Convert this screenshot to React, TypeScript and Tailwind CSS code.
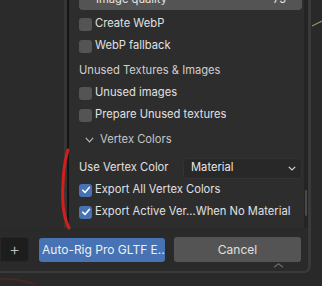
import React from "react";

function Check({ checked }: { checked?: boolean }) {
  return (
    <div
      className={
        "w-[13px] h-[13px] rounded-[3px] flex items-center justify-center shrink-0 " +
        (checked ? "bg-[#4772b3]" : "bg-[#545454]")
      }
    >
      {checked && (
        <svg width="10" height="10" viewBox="0 0 10 10">
          <path d="M1.8 5.2 L4 7.4 L8.3 2.4" fill="none" stroke="#ffffff" strokeWidth="1.6" strokeLinecap="round" strokeLinejoin="round" />
        </svg>
      )}
    </div>
  );
}

function CheckRow({ label, checked }: { label: string; checked?: boolean }) {
  return (
    <div className="h-[22px] flex items-center gap-[3px]">
      <Check checked={checked} />
      <span className="text-[#e0e0e0] whitespace-nowrap">{label}</span>
    </div>
  );
}

export default function App() {
  return (
    <div
      className="relative w-[322px] h-[286px] bg-[#292929] overflow-hidden text-[11.2px] leading-none"
      style={{ fontFamily: "Inter, 'Noto Sans', sans-serif" }}
    >
      {/* window */}
      <div className="w-[311px] h-[273px] flex flex-col border-r-[3px] border-b-[2px] border-[#3a3a3a] rounded-br-[7px] bg-[#2a2a2a] overflow-hidden">
        <div className="flex h-[228px]">
          {/* file list */}
          <div className="w-[64px] shrink-0 bg-[#2b2b2b]" />
          <div className="w-[3px] shrink-0 bg-[#363636]" />
          <div className="w-[2px] shrink-0 bg-[#151515]" />
          {/* side panel */}
          <div className="flex-1 min-w-0 flex bg-[#2d2d2d]">
            <div className="flex-1 min-w-0 flex flex-col pl-[10px] pr-[2px]">
              <div className="mt-[-10px] h-[20px] rounded-[4px] bg-[#545454] flex items-center justify-between pl-[17px] pr-[16px] text-[#e6e6e6]">
                <span>Image quality</span>
                <span>75</span>
              </div>
              <div className="mt-[3px]" />
              <CheckRow label="Create WebP" />
              <CheckRow label="WebP fallback" />
              <div className="mt-[3px] h-[22px] flex items-center text-[#cfcfcf]">Unused Textures &amp; Images</div>
              <CheckRow label="Unused images" />
              <CheckRow label="Prepare Unused textures" />
              <div className="mt-[3px] h-[22px] flex items-center pl-[6px] gap-[6px] text-[#c6c6c6]">
                <svg width="9" height="6" viewBox="0 0 9 6">
                  <path d="M0.8 0.8 L4.5 4.8 L8.2 0.8" fill="none" stroke="#b8b8b8" strokeWidth="1.2" />
                </svg>
                <span>Vertex Colors</span>
              </div>
              <div className="mt-[6px] h-[22px] flex items-center">
                <span className="w-[104px] shrink-0 text-[#e0e0e0]">Use Vertex Color</span>
                <div className="flex-1 h-[21px] rounded-[4px] bg-[#282828] border border-[#333333] flex items-center justify-between pl-[7px] pr-[5px] text-[#e6e6e6]">
                  <span>Material</span>
                  <svg width="8" height="5" viewBox="0 0 8 5">
                    <path d="M0.8 0.8 L4 4 L7.2 0.8" fill="none" stroke="#d0d0d0" strokeWidth="1.2" />
                  </svg>
                </div>
              </div>
              <CheckRow label="Export All Vertex Colors" checked />
              <CheckRow label="Export Active Ver...When No Material" checked />
            </div>
            {/* scrollbar track */}
            <div className="w-[4px] shrink-0 bg-[#242424] flex flex-col pt-[190px]">
              <div className="ml-[1px] w-[2px] h-[26px] rounded-full bg-[#4a4a4a]" />
            </div>
          </div>
        </div>
        {/* bottom bar */}
        <div className="relative flex-1 flex items-start pt-[9px] bg-[#2a2a2a] text-[12px]">
          <div className="w-[29px] h-[25px] rounded-r-[4px] bg-[#1d1d1d] border border-[#262626] flex items-center justify-center text-[#bdbdbd] text-[17px] font-light">
            +
          </div>
          <div className="ml-[10px] mt-[1px] w-[126px] h-[24px] rounded-[3px] bg-[#4772b3] flex items-center pl-[3px] text-[#f0f0f0] whitespace-nowrap overflow-hidden">
            Auto-Rig Pro GLTF E...
          </div>
          <div className="ml-[9px] w-[127px] h-[25px] rounded-[3px] bg-[#545454] flex items-center justify-center text-[#e0e0e0]">
            Cancel
          </div>
          <svg className="absolute left-[273px] top-[35px]" width="11" height="5" viewBox="0 0 11 5">
            <path d="M1 4.2 L5.5 0.8 L10 4.2" fill="none" stroke="#6a6a6a" strokeWidth="1.2" />
          </svg>
        </div>
      </div>

      {/* annotations / viewport details */}
      <svg className="absolute left-0 top-0 pointer-events-none" width="322" height="286" viewBox="0 0 322 286">
        <path d="M68 150 C 63 165, 62 190, 63 205 C 64 215, 66 222, 69 228" fill="none" stroke="#d11f1f" strokeWidth="3" strokeLinecap="round" />
        <path d="M312 26 L322 21" fill="none" stroke="#8c9a5e" strokeWidth="1.2" />
        <path d="M0 279 C 10 278, 20 280, 35 284" fill="none" stroke="#4a2626" strokeWidth="2" />
      </svg>
    </div>
  );
}
